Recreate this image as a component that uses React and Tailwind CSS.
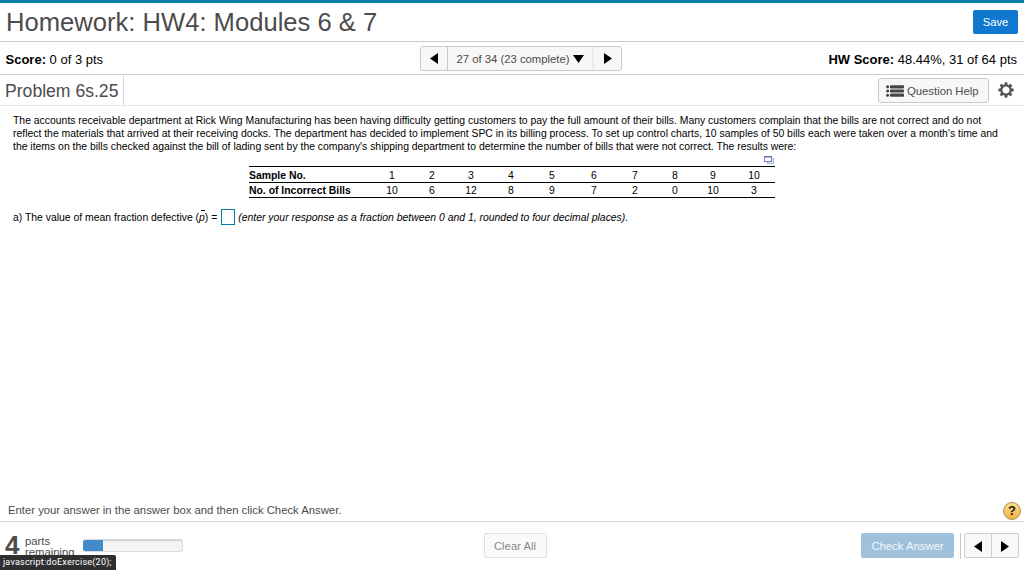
import React from 'react';

const samples = [
  { no: 1, bills: 10, width: 'w-[40px]' },
  { no: 2, bills: 6, width: 'w-[40px]' },
  { no: 3, bills: 12, width: 'w-[38px]' },
  { no: 4, bills: 8, width: 'w-[42px]' },
  { no: 5, bills: 9, width: 'w-[40px]' },
  { no: 6, bills: 7, width: 'w-[44px]' },
  { no: 7, bills: 2, width: 'w-[38px]' },
  { no: 8, bills: 0, width: 'w-[42px]' },
  { no: 9, bills: 10, width: 'w-[34px]' },
  { no: 10, bills: 3, width: 'w-[45px] pl-[3px]' },
];

const problemLines = [
  'The accounts receivable department at Rick Wing Manufacturing has been having difficulty getting customers to pay the full amount of their bills. Many customers complain that the bills are not correct and do not',
  "reflect the materials that arrived at their receiving docks. The department has decided to implement SPC in its billing process. To set up control charts, 10 samples of 50 bills each were taken over a month's time and",
  "the items on the bills checked against the bill of lading sent by the company's shipping department to determine the number of bills that were not correct. The results were:",
];

const Triangle = ({ direction }) => {
  const points = {
    left: '8,0 8,11 0,5.5',
    right: '0,0 8,5.5 0,11',
    down: '0,0 11,0 5.5,8',
  };
  const down = direction === 'down';
  return (
    <svg width={down ? 11 : 8} height={down ? 8 : 11} className="shrink-0 mt-px" fill="#000">
      <polygon points={points[direction]} />
    </svg>
  );
};

const ListIcon = () => (
  <svg width="18" height="12" viewBox="0 0 18 12" fill="#444" className="shrink-0 mt-px">
    <circle cx="1.6" cy="1.7" r="1.5" />
    <circle cx="1.6" cy="6" r="1.5" />
    <circle cx="1.6" cy="10.3" r="1.5" />
    <rect x="4" y="0.2" width="14" height="3.2" rx="0.8" />
    <rect x="4" y="4.4" width="14" height="3.2" rx="0.8" />
    <rect x="4" y="8.6" width="14" height="3.2" rx="0.8" />
  </svg>
);

const GearIcon = () => (
  <svg width="16" height="16" viewBox="-8 -8 16 16" className="shrink-0">
    <circle r="4.7" fill="none" stroke="#555" strokeWidth="2.2" />
    {[0, 45, 90, 135, 180, 225, 270, 315].map((angle) => (
      <path key={angle} d="M-1.7 -5 L-1.2 -7.7 H1.2 L1.7 -5 Z" fill="#555" transform={`rotate(${angle})`} />
    ))}
  </svg>
);

const PopupIcon = () => (
  <svg width="10" height="8" viewBox="0 0 10 8" className="shrink-0">
    <path d="M8 2.5 H9.5 V7.5 H3 V6" fill="#dfe4f5" stroke="#aab4dc" />
    <rect x="0.5" y="0.5" width="7" height="5" fill="#fff" stroke="#7182c0" />
    <rect x="0" y="0" width="8" height="1.5" fill="#5f72b5" />
  </svg>
);

const Header = () => (
  <>
    <div className="h-[41px] flex items-center justify-between border-t-[3px] border-[#007fa3] pl-[6px] pr-[6px]">
      <h1 className="text-[25.6px] leading-[30px] text-[#4c4c4c] whitespace-nowrap">
        Homework: HW4: Modules 6 &amp; 7
      </h1>
      <button className="w-[45px] h-[24px] rounded-[2px] bg-[#1079cf] text-white text-[11.3px] leading-[24px]">
        Save
      </button>
    </div>

    <div className="h-[34px] grid grid-cols-[1fr_202px_1fr] items-center border-y border-[#c7cad6] text-[13px] text-black">
      <div className="pl-[5.5px] pt-[3px] whitespace-nowrap">
        <b>Score:</b> 0 of 3 pts
      </div>
      <div className="flex h-[25px] ml-[9px] w-[202px] rounded-[3px] border border-[#c9c9c9] bg-[#f7f7f7] text-[#4c4c4c]">
        <button className="w-[27px] flex items-center justify-center border-r border-[#c9c9c9]">
          <Triangle direction="left" />
        </button>
        <button className="w-[146px] flex items-center justify-center gap-[3px] text-[11.3px] border-r-2 border-[#ebebeb] whitespace-nowrap">
          <span className="pt-[2px]">27 of 34 (23 complete)</span>
          <Triangle direction="down" />
        </button>
        <button className="w-[27px] flex items-center justify-center">
          <Triangle direction="right" />
        </button>
      </div>
      <div className="pr-[7px] pt-[3px] text-right whitespace-nowrap">
        <b>HW Score:</b> 48.44%, 31 of 64 pts
      </div>
    </div>

    <div className="h-[31px] flex items-center border-b border-[#e6e6ec]">
      <h2 className="w-[124px] h-[29px] mt-px pl-[5px] pt-px leading-[28px] text-[17.6px] text-[#4c4c4c] border-r border-[#d3d5e2] whitespace-nowrap">
        Problem 6s.25
      </h2>
      <button className="ml-auto w-[111px] h-[25px] flex items-center pl-[7px] gap-[3px] rounded-[3px] border border-[#c9c9c9] bg-[#f7f7f7] text-[11.3px] text-[#4c4c4c] whitespace-nowrap">
        <ListIcon />
        <span className="pt-[2px]">Question Help</span>
      </button>
      <button className="ml-[9px] mr-[10px]">
        <GearIcon />
      </button>
    </div>
  </>
);

const SampleTable = () => (
  <div className="w-[526px] ml-[249px]">
    <div className="flex justify-end h-[13px] pt-[3px] pr-px">
      <PopupIcon />
    </div>
    <table className="w-[526px] table-fixed border-collapse text-[10.42px] leading-[13px]">
      <tbody>
        <tr className="h-[16px] border-t border-b border-black">
          <th className="w-[123px] text-left font-bold whitespace-nowrap p-0 pt-[2px]">Sample No.</th>
          {samples.map((s) => (
            <td key={s.no} className={`${s.width} pt-[2px] text-center`}>{s.no}</td>
          ))}
        </tr>
        <tr className="h-[15px] border-b border-black">
          <th className="text-left font-bold whitespace-nowrap p-0 pt-px">No. of Incorrect Bills</th>
          {samples.map((s) => (
            <td key={s.no} className={`${s.width} pt-px text-center`}>{s.bills}</td>
          ))}
        </tr>
      </tbody>
    </table>
  </div>
);

const Problem = () => (
  <main className="flex-1 pt-[8px] text-[10.42px] text-black">
    <div className="pl-[13px] leading-[13px]">
      {problemLines.map((line) => (
        <p key={line} className="whitespace-nowrap">{line}</p>
      ))}
    </div>
    <SampleTable />
    <div className="flex items-center h-[16px] mt-[11px] pl-[13px] whitespace-nowrap">
      <span className="pt-[2px]">
        a) The value of mean fraction defective (
        <span className="relative italic">
          p
          <span className="absolute left-[2px] top-[-2px] w-[4px] h-px bg-black" />
        </span>
        ) =
      </span>
      <input className="w-[14px] h-[16px] ml-[4px] mr-[3px] border border-[#007fa3]" />
      <i className="pt-[2px]">(enter your response as a fraction between 0 and 1, rounded to four decimal places).</i>
    </div>
  </main>
);

const Footer = () => (
  <footer>
    <div className="h-[22px] flex items-center justify-between pl-[8px] pr-[3px] text-[11.3px] text-[#4c4c4c] border-b border-[#d5d3e3]">
      <span className="pb-px whitespace-nowrap">Enter your answer in the answer box and then click Check Answer.</span>
      <button className="w-[18px] h-[18px] rounded-full border border-[#a9905a] bg-linear-to-b from-[#ffe08a] to-[#f0b13c] text-[13px] leading-[15px] font-bold text-[#222]">
        ?
      </button>
    </div>

    <div className="relative h-[48px] grid grid-cols-[1fr_63px_1fr] text-[#4c4c4c]">
      <div className="flex overflow-hidden">
        <span className="ml-[5px] mt-[10px] w-[20px] text-[26px] leading-[26px] font-bold">4</span>
        <span className="mt-[14px] w-[58px] text-[11.3px] leading-[11px]">
          parts<br />remaining
        </span>
        <div className="mt-[17px] w-[100px] h-[13px] rounded-[3px] overflow-hidden border-y border-r border-[#dcdcdc] bg-[#f4f4f4] shadow-[inset_0_1px_1px_#ccc]">
          <div className="w-[20px] h-full bg-[#428bca]" />
        </div>
      </div>
      <button className="w-[63px] h-[25px] mt-[11px] ml-[3px] pt-[2px] rounded-[2px] border border-[#e0e0e0] bg-[#fafafa] text-[11.3px] text-[#8a8a8a] whitespace-nowrap">
        Clear All
      </button>
      <div className="flex justify-end pt-[11px] pr-[5px]">
        <button className="w-[93px] h-[25px] pt-[2px] rounded-[2px] bg-[#9fc1dc] text-[11.3px] text-[#f2f7fb] whitespace-nowrap">
          Check Answer
        </button>
        <div className="w-px h-[26px] ml-[6px] mr-[3px] bg-[#c4c4c4]" />
        <div className="flex w-[55px] h-[25px] rounded-[2px] border border-[#cfcfcf] bg-[#f8f8f8]">
          <button className="w-[27px] flex items-center justify-center border-r border-[#cfcfcf]">
            <Triangle direction="left" />
          </button>
          <button className="w-[26px] flex items-center justify-center">
            <Triangle direction="right" />
          </button>
        </div>
      </div>
      {/* browser status bubble */}
      <div className="absolute left-0 bottom-0 w-[116px] h-[15px] pl-[3px] rounded-tr-[2px] bg-[#2f2f31] text-white text-[9px] tracking-[0.22px] leading-[15px] whitespace-nowrap font-['Roboto',sans-serif]">
        javascript:doExercise(20);
      </div>
    </div>
  </footer>
);

const App = () => (
  <div className="w-[1024px] h-[570px] flex flex-col overflow-hidden bg-white font-['Liberation_Sans',Arial,sans-serif]">
    <Header />
    <Problem />
    <Footer />
  </div>
);

export default App;
